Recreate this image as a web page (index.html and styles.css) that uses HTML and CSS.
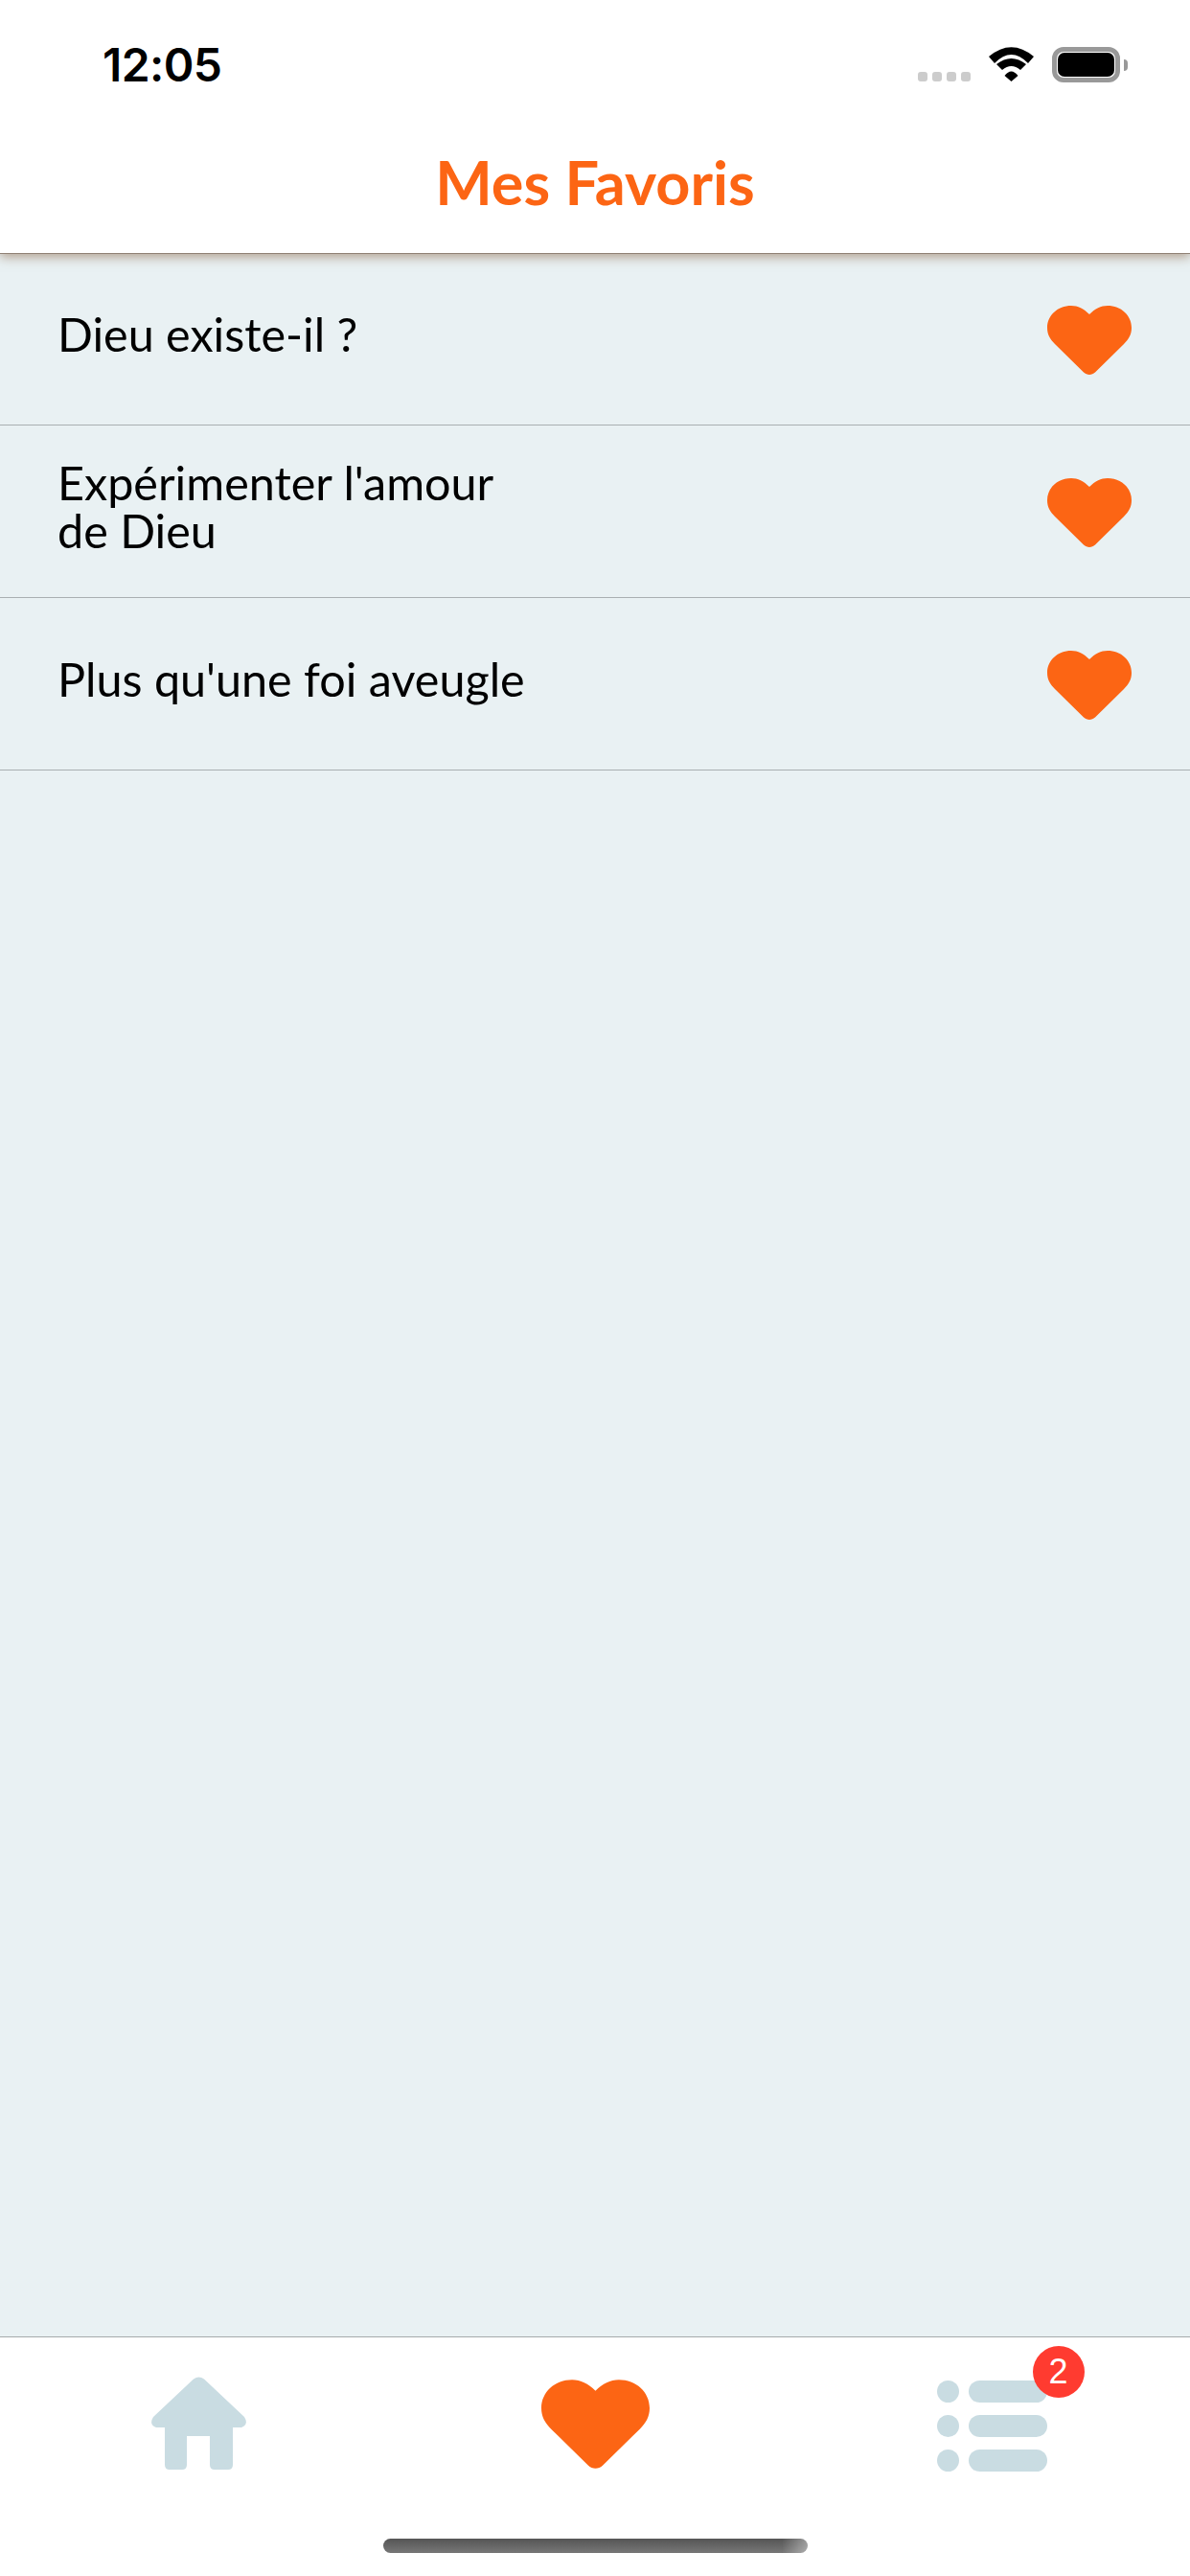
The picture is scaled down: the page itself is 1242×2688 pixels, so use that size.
FILE: index.html
```html
<!DOCTYPE html>
<html lang="fr">
  <head>
    <meta charset="UTF-8" />
    <meta name="viewport" content="width=device-width, initial-scale=1.0" />
    <title>Mes Favoris</title>
    <link rel="stylesheet" href="styles.css">
  </head>
  <body>
    <svg class="defs" width="0" height="0">
      <symbol id="heart" viewBox="0 0 88 72">
        <path d="M44 9C38 3 32 0 25 0C11 0 0 10 0 23C0 30 3 35 8 40L38 69.500C41.500 72.800 46.500 72.800 50 69.500L80 40C85 35 88 30 88 23C88 10 77 0 63 0C56 0 50 3 44 9Z" />
      </symbol>
    </svg>

    <header class="header">
      <div class="status-bar">
        <span class="time">12:05</span>
        <div class="status-icons">
          <div class="signal">
            <span class="signal-dot"></span>
            <span class="signal-dot"></span>
            <span class="signal-dot"></span>
            <span class="signal-dot"></span>
          </div>
          <svg class="wifi" width="47" height="36" viewBox="0 0 47 36">
            <path d="M0 10Q23.500 -9.500 47 10L41 17Q23.500 -1 6 17Z" />
            <path d="M8 18Q23.500 6 39 18L33 24Q23.500 16 14 24Z" />
            <path d="M16.500 30Q23.500 21 30.500 30L23.500 36Z" />
          </svg>
          <div class="battery">
            <div class="battery-level"></div>
          </div>
          <div class="battery-nub"></div>
        </div>
      </div>
      <h1 class="nav-title">Mes Favoris</h1>
    </header>

    <main class="list">
      <div class="row">
        <p class="row-title">Dieu existe-il ?</p>
        <svg class="row-heart"><use href="#heart" /></svg>
      </div>
      <div class="row">
        <p class="row-title">Expérimenter l'amour de Dieu</p>
        <svg class="row-heart"><use href="#heart" /></svg>
      </div>
      <div class="row">
        <p class="row-title">Plus qu'une foi aveugle</p>
        <svg class="row-heart"><use href="#heart" /></svg>
      </div>
    </main>

    <footer class="tab-bar">
      <div class="tabs">
        <div class="tab">
          <svg class="home-icon" width="101" height="97" viewBox="0 0 101 97">
            <path d="M45 2.500Q50.500 -1.500 56 2.500L98 42Q103 50 95 53L86 53L86 92Q86 97 81 97L67 97Q62 97 62 92L62 62L38 62L38 92Q38 97 33 97L20 97Q15 97 15 92L15 53L6 53Q-2 50 3 42Z" />
          </svg>
        </div>
        <div class="tab">
          <svg class="tab-heart"><use href="#heart" /></svg>
        </div>
        <div class="tab">
          <div class="list-icon">
            <svg width="115" height="95" viewBox="0 0 115 95">
              <circle cx="11.500" cy="11.500" r="11.500" />
              <rect x="33" y="0" width="82" height="23" rx="11.500" />
              <circle cx="11.500" cy="47.500" r="11.500" />
              <rect x="33" y="36" width="82" height="23" rx="11.500" />
              <circle cx="11.500" cy="83.500" r="11.500" />
              <rect x="33" y="72" width="82" height="23" rx="11.500" />
            </svg>
            <span class="badge">2</span>
          </div>
        </div>
      </div>
      <div class="home-indicator"></div>
    </footer>
  </body>
</html>
```

FILE: styles.css
```css
html,
body {
  margin: 0;
  padding: 0;
}

body {
  width: 1242px;
  height: 2688px;
  display: flex;
  flex-direction: column;
  overflow: hidden;
  background-color: #e9f1f3;
  font-family: Lato, "Open Sans", sans-serif;
  color: #000;
}

.defs {
  display: block;
  height: 0;
}

.header {
  position: relative;
  z-index: 1;
  height: 265px;
  box-sizing: border-box;
  background-color: #fff;
  border-bottom: 1px solid #8f8175;
  box-shadow: 0 3px 11px rgba(120, 75, 40, 0.5);
}

.status-bar {
  height: 130px;
  box-sizing: border-box;
  padding: 49px 65px 0 107px;
  display: flex;
  justify-content: space-between;
}

.time {
  font-family: Inter, sans-serif;
  font-size: 48px;
  font-weight: 600;
  line-height: 37px;
  letter-spacing: -0.6px;
}

.status-icons {
  display: flex;
  align-items: flex-start;
}

.signal {
  display: flex;
  gap: 5px;
  margin-top: 26px;
  margin-right: 19px;
}

.signal-dot {
  width: 10px;
  height: 10px;
  border-radius: 3px;
  background-color: #ccc;
}

.wifi {
  margin-right: 19px;
}

.battery {
  width: 71px;
  height: 37px;
  box-sizing: border-box;
  padding: 1px;
  border: 5px solid #999;
  border-radius: 12px;
}

.battery-level {
  width: 100%;
  height: 100%;
  border-radius: 7px;
  background-color: #000;
}

.battery-nub {
  width: 4px;
  height: 12px;
  margin-top: 13px;
  margin-left: 4px;
  border-radius: 0 6px 6px 0;
  background-color: #999;
}

.nav-title {
  margin: 0;
  padding-bottom: 15px;
  height: 119px;
  display: flex;
  align-items: center;
  justify-content: center;
  font-size: 63px;
  font-weight: 700;
  color: #fc6514;
}

.list {
  flex: 1;
  margin-top: -1px;
}

.row {
  height: 180px;
  box-sizing: border-box;
  padding: 0 61px 0 60px;
  display: flex;
  align-items: center;
  justify-content: space-between;
  border-bottom: 1px solid #a9afb1;
}

.row-title {
  margin: 0 0 12px;
  max-width: 490px;
  font-size: 48.500px;
  line-height: 50px;
}

.row-heart {
  width: 88px;
  height: 72px;
  margin-top: 3px;
  fill: #fc6514;
}

.tab-bar {
  height: 250px;
  box-sizing: border-box;
  background-color: #fff;
  border-top: 1px solid #a5abac;
}

.tabs {
  display: grid;
  grid-template-columns: repeat(3, 414px);
  height: 181px;
}

.tab {
  display: flex;
  align-items: center;
  justify-content: center;
}

.home-icon {
  margin-bottom: 2px;
  fill: #c9dce2;
}

.tab-heart {
  width: 113px;
  height: 93px;
  fill: #fc6514;
}

.list-icon {
  position: relative;
  display: flex;
  margin-top: 4px;
  fill: #c9dce2;
}

.badge {
  position: absolute;
  top: -36px;
  left: 100px;
  width: 54px;
  height: 54px;
  border-radius: 50%;
  display: flex;
  align-items: center;
  justify-content: center;
  background-color: #ff3b30;
  color: #fff;
  font-family: "Liberation Sans", sans-serif;
  font-size: 36px;
}

.home-indicator {
  width: 443px;
  height: 15px;
  margin: 29px auto 0;
  border-radius: 8px;
  background: linear-gradient(90deg, rgba(255, 255, 255, 0) 94%, rgba(255, 255, 255, 0.4) 100%), linear-gradient(180deg, #555 0%, #777 100%);
}
```
